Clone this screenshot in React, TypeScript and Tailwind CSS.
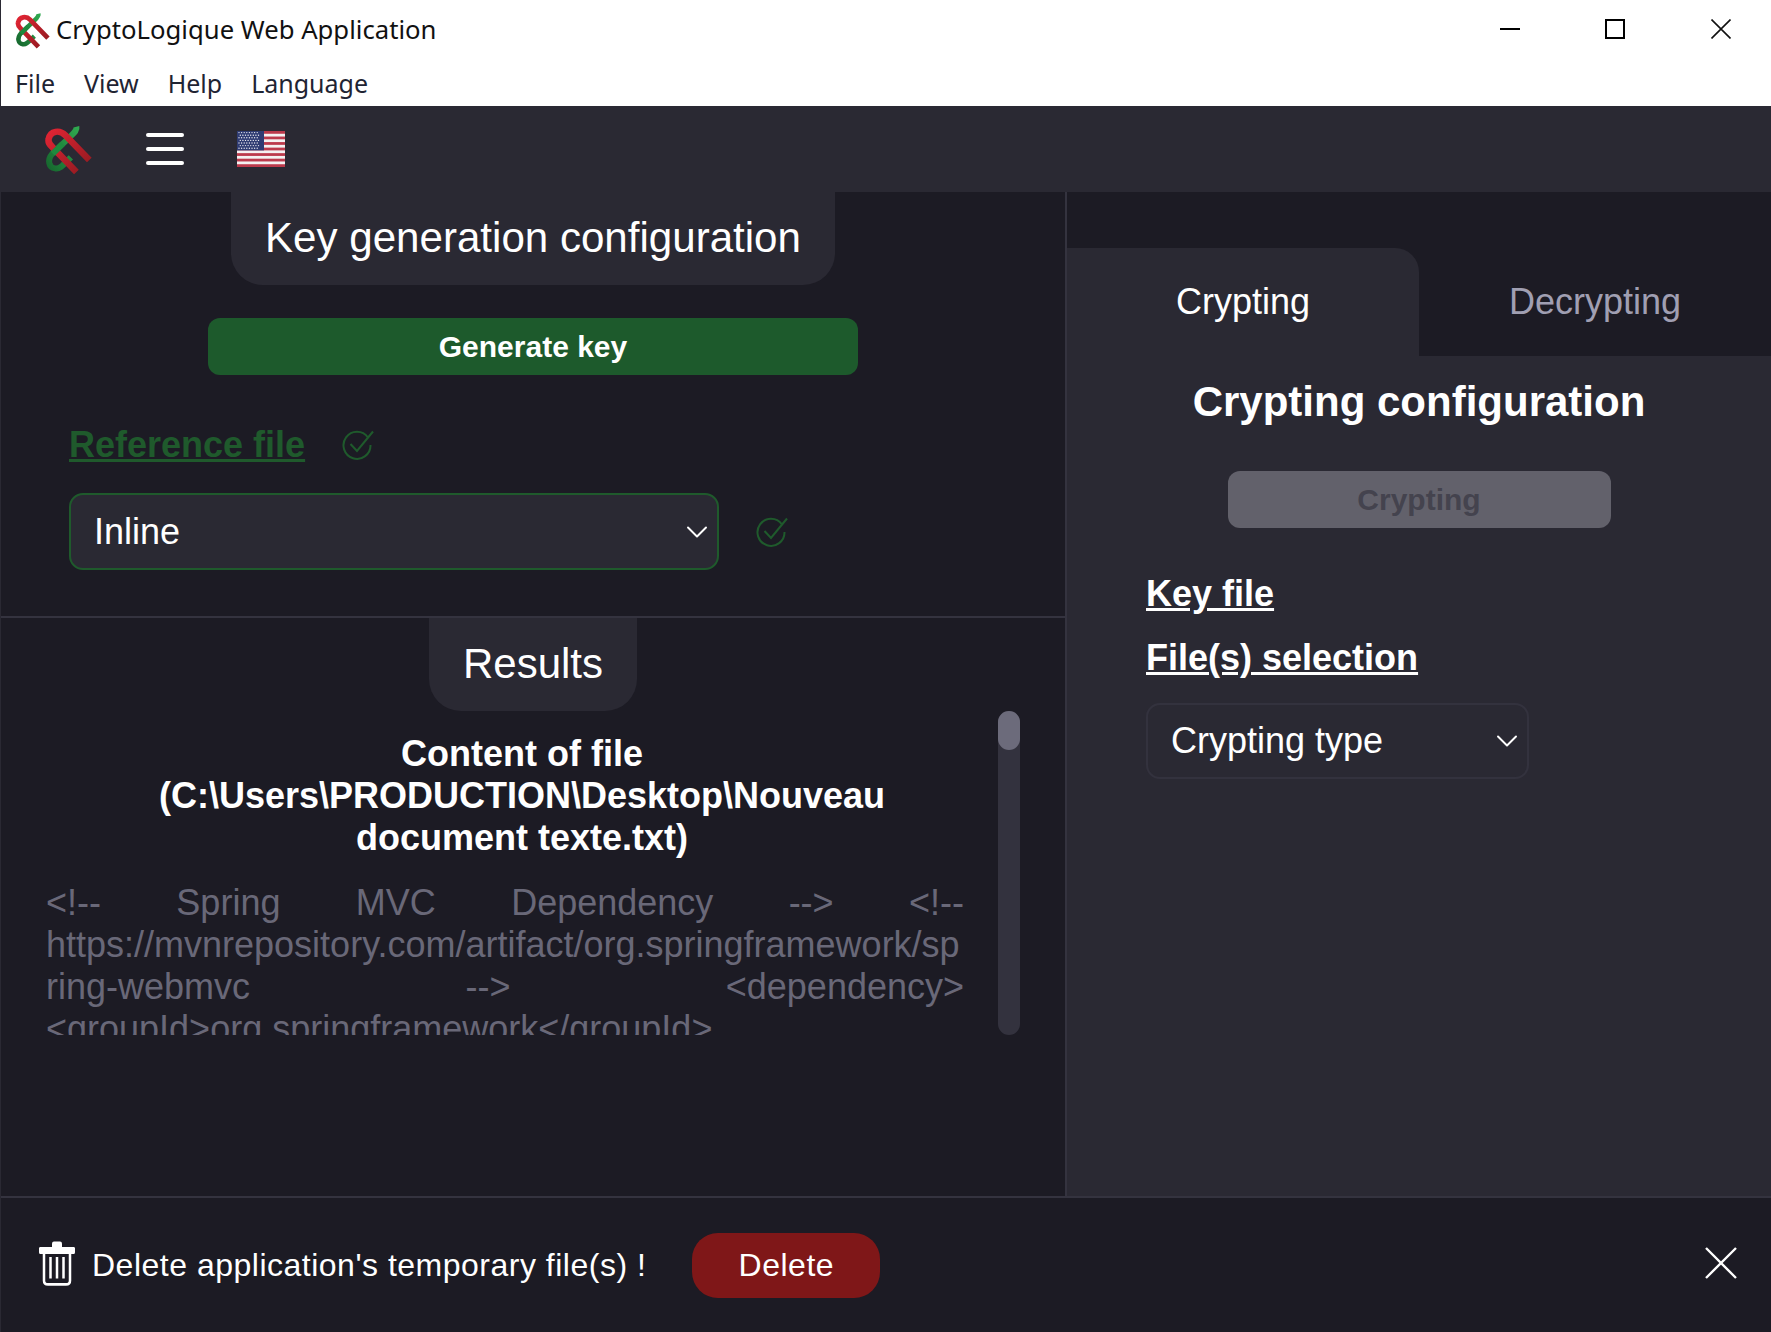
import React from "react";
import { ChevronDown } from "lucide-react";

const MENU = ["File", "View", "Help", "Language"];

function Logo({ className }: { className: string }) {
  return (
    <svg viewBox="14 10 52 56" className={className} fill="none">
      <defs>
        <linearGradient id="redLink" x1="0" y1="0" x2="1" y2="1">
          <stop offset="0" stopColor="#e02433" />
          <stop offset="1" stopColor="#8f1a20" />
        </linearGradient>
        <linearGradient id="greenLink" x1="1" y1="0" x2="0" y2="1">
          <stop offset="0" stopColor="#2fa84f" />
          <stop offset="1" stopColor="#17692f" />
        </linearGradient>
      </defs>
      <path d="M48 14 C49 18 45 21 40 26 L22 43 C16 50 18 58 25 59 C30 60 33 56 42 47" stroke="url(#greenLink)" strokeWidth="6.5" />
      <path d="M62 50 L36 23 C30 17 20 18 18 27 C17 31 19 33 22 36 L48 63" stroke="url(#redLink)" strokeWidth="7" />
      <path d="M22.5 43 L33 32.5" stroke="#1f8a3e" strokeWidth="6.5" />
    </svg>
  );
}

function Flag() {
  const stripes = [0, 2, 4, 6, 8, 10, 12];
  const stars: Array<[number, number]> = [];
  for (let r = 0; r < 7; r++) {
    for (let c = 0; c < 8; c++) {
      stars.push([2 + c * 2.6 + (r % 2 ? 1.3 : 0), 1.6 + r * 2.6]);
    }
  }
  return (
    <svg viewBox="0 0 48 36" className="h-[36px] w-[48px]">
      <rect width="48" height="36" fill="#f4f2f2" />
      {stripes.map((s) => (
        <rect key={s} y={s * (36 / 13)} width="48" height={36 / 13} fill="#bb3a4c" />
      ))}
      <rect width="27" height="19.4" fill="#2f3c73" />
      {stars.map(([x, y], i) => (
        <circle key={i} cx={x} cy={y} r="0.7" fill="#e8e8f0" />
      ))}
    </svg>
  );
}

function CheckMark() {
  return (
    <svg viewBox="0 0 34 32" className="h-[32px] w-[34px]" fill="none" stroke="#1f5a2c" strokeWidth="2">
      <path d="M27 8.5 A13.5 13.5 0 1 0 29.5 16" />
      <path d="M9.5 15 L16 22 L32 2.5" />
    </svg>
  );
}

function TrashIcon() {
  return (
    <svg viewBox="0 0 38 43" className="-mt-[4px] h-[46px] w-[38px]" preserveAspectRatio="none" fill="none" stroke="#fff">
      <path d="M2 6.5 H14 V3.5 Q14 1.5 16 1.5 H22 Q24 1.5 24 3.5 V6.5 H36 Q37 6.5 37 8 V11.5 Q37 13 36 13 H2 Q1 13 1 11.5 V8 Q1 6.5 2 6.5 Z" fill="#fff" stroke="none" />
      <path d="M6 13 V38 Q6 41.5 10 41.5 H28 Q32 41.5 32 38 V13" strokeWidth="2.5" />
      <path d="M12.5 16 V36 M19 16 V36 M25.5 16 V36" strokeWidth="2.5" />
    </svg>
  );
}

function WindowControls() {
  return (
    <div className="-mt-[3px] flex items-center">
      <div className="mr-[85px] h-[2px] w-[20px] bg-black" />
      <div className="mr-[86px] h-[20px] w-[20px] border-2 border-black" />
      <svg viewBox="0 0 20 20" className="mr-[40px] h-[20px] w-[20px]" stroke="#111" strokeWidth="1.6">
        <path d="M0.5 0.5 L19.5 19.5 M19.5 0.5 L0.5 19.5" />
      </svg>
    </div>
  );
}

function Pill({ text, className }: { text: string; className: string }) {
  return (
    <div className={`mx-auto flex h-[93px] items-center justify-center rounded-b-[32px] bg-[#2a2933] pb-[2px] text-white ${className}`}>
      {text}
    </div>
  );
}

const BODY_TEXT =
  "<!-- Spring MVC Dependency --> <!-- https://mvnrepository.com/artifact/org.springframework/spring-webmvc --> <dependency> <groupId>org.springframework</groupId> <artifactId>spring-webmvc</artifactId> <version>5.3.9</version> </dependency>";

export default function App() {
  return (
    <div className="flex h-screen w-full flex-col overflow-hidden border-l border-[#2a2933] bg-[#1c1b24] font-['Liberation_Sans',Arial,sans-serif]">
      {/* Title bar */}
      <header className="h-[106px] shrink-0 bg-white font-['Noto_Sans',sans-serif] text-[#111]">
        <div className="flex h-[60px] items-center justify-between">
          <div className="flex items-center pl-[14px]">
            <Logo className="h-[38px] w-[36px]" />
            <span className="ml-[5px] text-[25.7px] leading-none">CryptoLogique Web Application</span>
          </div>
          <WindowControls />
        </div>
        <nav className="flex h-[46px] items-start gap-[29px] pl-[14px] text-[25px] leading-[46px] text-[#1f2433]">
          {MENU.map((m) => (
            <span key={m}>{m}</span>
          ))}
        </nav>
      </header>

      {/* App navbar */}
      <div className="flex h-[86px] shrink-0 items-center bg-[#2a2933] pl-[44px]">
        <Logo className="h-[52px] w-[48px]" />
        <div className="ml-[53px] flex w-[38px] flex-col gap-[10px]">
          <div className="h-[4px] rounded-full bg-white" />
          <div className="h-[4px] rounded-full bg-white" />
          <div className="h-[4px] rounded-full bg-white" />
        </div>
        <div className="ml-[53px]">
          <Flag />
        </div>
      </div>

      <div className="flex min-h-0 flex-1 border-b-2 border-[#34333f]">
        {/* Left column */}
        <main className="flex w-[1066px] shrink-0 flex-col border-r-2 border-[#34333f]">
          <section className="h-[426px] shrink-0 border-b-2 border-[#34333f]">
            <Pill text="Key generation configuration" className="w-[604px] text-[42.1px]" />
            <button
              type="button"
              className="mx-auto mt-[33px] block h-[57px] w-[650px] rounded-[12px] bg-[#1d5a2c] text-[30px] font-bold text-white"
            >
              Generate key
            </button>
            <div className="ml-[68px] mt-[49px] flex h-[42px] items-center">
              <span className="text-[36px] font-bold text-[#1f5a2c] underline">Reference file</span>
              <span className="ml-[36px]"><CheckMark /></span>
            </div>
            <div className="ml-[68px] mt-[27px] flex items-center">
              <div className="flex h-[77px] w-[650px] items-center justify-between rounded-[14px] border-2 border-[#1f5a2c] bg-[#2a2933] pl-[23px] pr-[2px] text-[36px] text-white">
                Inline
                <ChevronDown className="h-[36px] w-[36px] text-white" strokeWidth={1.3} />
              </div>
              <span className="ml-[36px]"><CheckMark /></span>
            </div>
          </section>

          <section className="flex min-h-0 flex-1 flex-col">
            <Pill text="Results" className="w-[208px] text-[42px]" />
            <div className="ml-[45px] flex h-[324px] w-[975px]">
              <div className="h-full w-[952px] shrink-0 overflow-hidden pt-[22px]">
                <h2 className="mx-auto w-[800px] text-center text-[36px] font-bold leading-[42px] text-white">
                  Content of file (C:\Users\PRODUCTION\Desktop\Nouveau document texte.txt)
                </h2>
                <p className="mt-[23px] w-[918px] text-justify text-[36px] leading-[42px] break-words text-[#696878]">
                  {BODY_TEXT}
                </p>
              </div>
              <div className="h-full w-[22px] shrink-0 rounded-full bg-[#33323e]">
                <div className="h-[39px] rounded-full bg-[#6c6b7b]" />
              </div>
            </div>
          </section>
        </main>

        {/* Right column */}
        <aside className="flex min-w-0 flex-1 flex-col">
          <div className="mt-[56px] flex h-[108px] shrink-0">
            <div className="flex w-[352px] items-center justify-center rounded-tr-[24px] bg-[#2a2933] text-[36px] text-white">
              Crypting
            </div>
            <div className="flex flex-1 items-center justify-center text-[36px] text-[#a09fb2]">
              Decrypting
            </div>
          </div>
          <div className="flex-1 bg-[#2a2933]">
            <h2 className="mt-[22px] text-center text-[42px] font-bold leading-[48px] text-white">
              Crypting configuration
            </h2>
            <button
              type="button"
              className="mx-auto mt-[45px] block h-[57px] w-[383px] rounded-[12px] bg-[#62616b] text-[30px] font-bold text-[#44434e]"
            >
              Crypting
            </button>
            <div className="ml-[79px] mt-[45px] text-[36px] font-bold leading-[42px] text-white underline">
              Key file
            </div>
            <div className="ml-[79px] mt-[22px] text-[36px] font-bold leading-[42px] text-white underline">
              File(s) selection
            </div>
            <div className="ml-[79px] mt-[24px] flex h-[76px] w-[383px] items-center justify-between rounded-[14px] border-2 border-[#33323e] pl-[23px] pr-[2px] text-[36px] text-white">
              Crypting type
              <ChevronDown className="h-[36px] w-[36px] text-white" strokeWidth={1.3} />
            </div>
          </div>
        </aside>
      </div>

      {/* Bottom banner */}
      <footer className="flex h-[134px] shrink-0 items-center pl-[37px] pr-[34px] text-white">
        <TrashIcon />
        <span className="ml-[16px] text-[32px] tracking-[0.5px]">Delete application's temporary file(s) !</span>
        <button type="button" className="ml-[46px] h-[65px] w-[188px] rounded-[26px] bg-[#7f1718] text-[32px] tracking-[0.5px] text-white">
          Delete
        </button>
        <svg viewBox="0 0 32 32" className="ml-auto -mt-[4px] h-[32px] w-[32px]" stroke="#fff" strokeWidth="2.4">
          <path d="M1 1 L31 31 M31 1 L1 31" />
        </svg>
      </footer>
    </div>
  );
}
